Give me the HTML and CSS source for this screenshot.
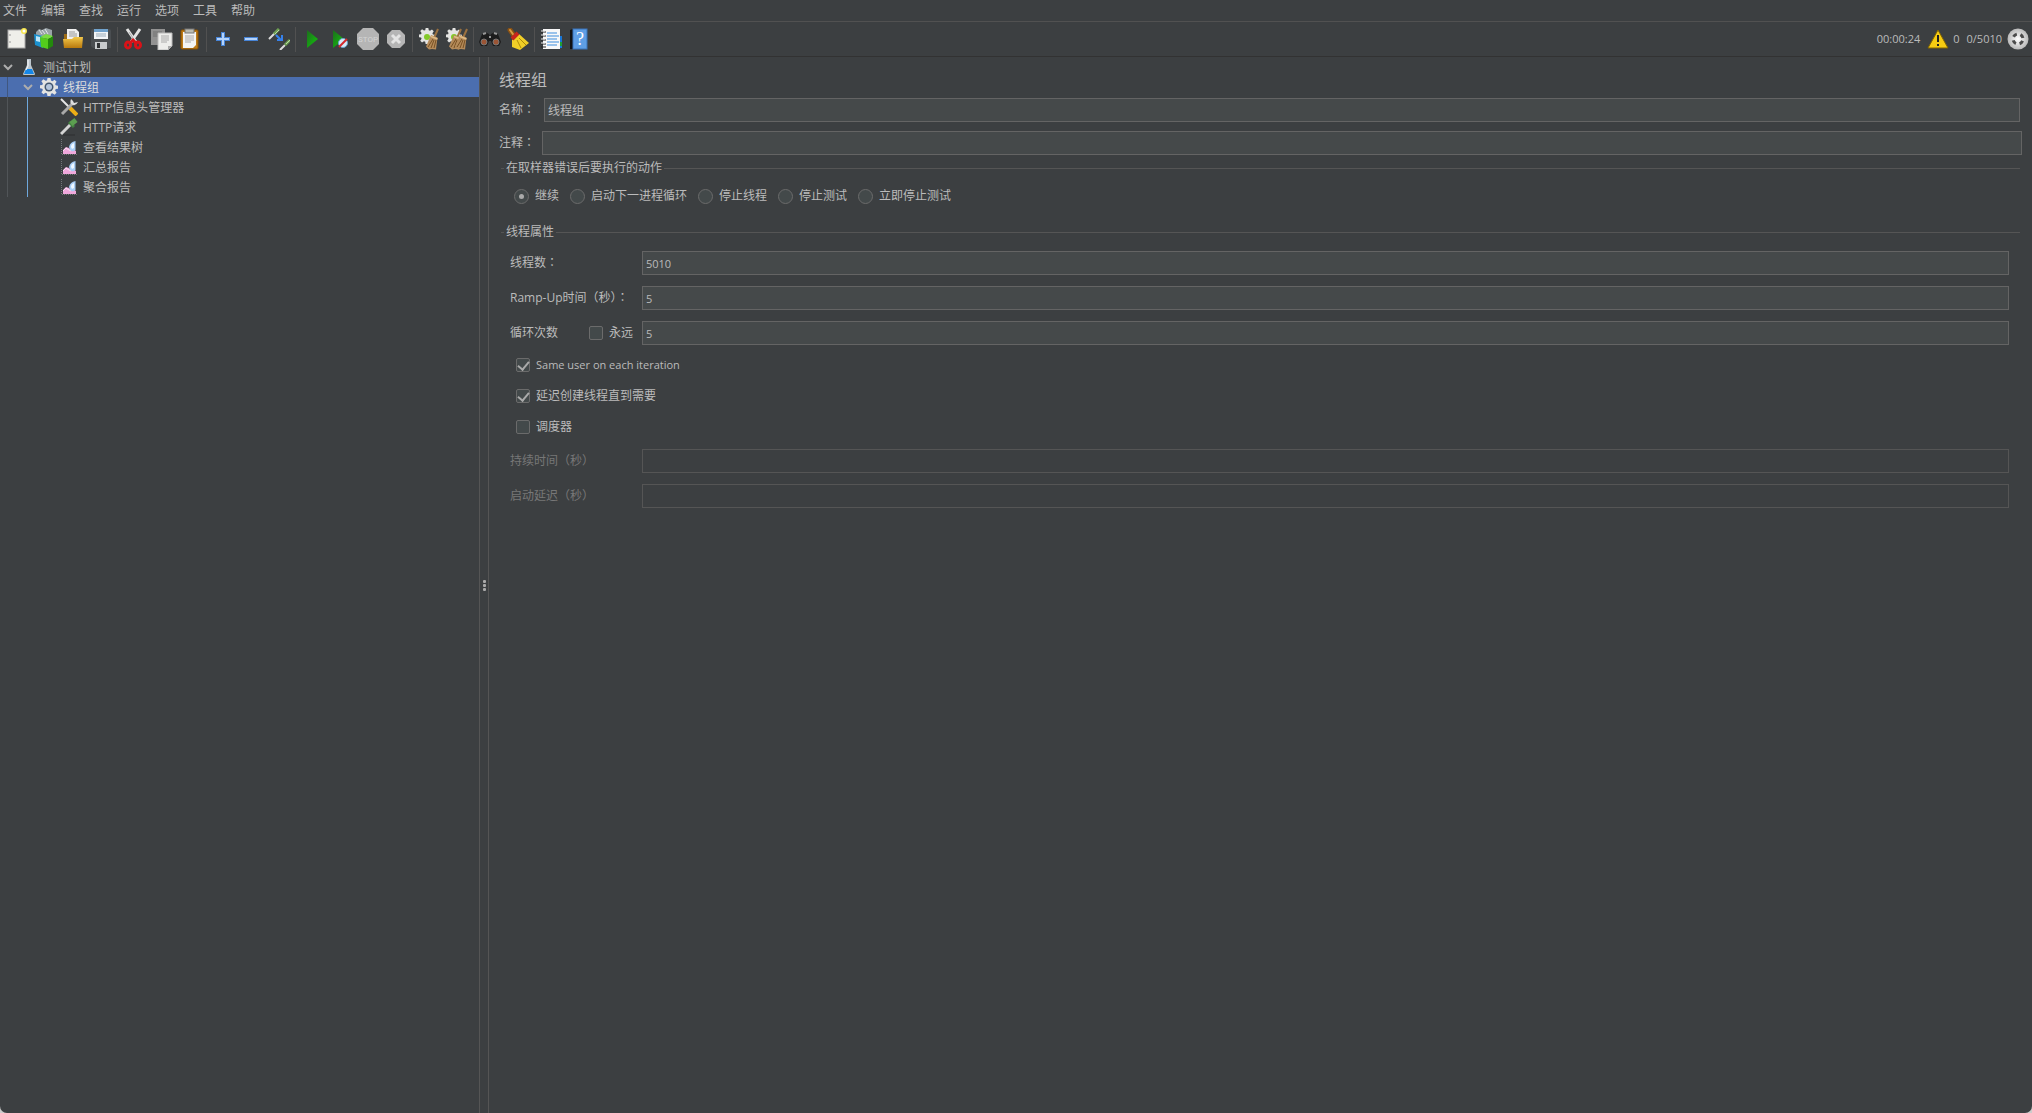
FILE: index.html
```
<!DOCTYPE html>
<html lang="zh-CN">
<head>
	<meta charset="UTF-8">
	<title>线程组</title>
	<link rel="stylesheet" href="styles.css">
</head>
<body>
	<!-- shared shapes -->
	<svg class="defs" width="0" height="0">
		<defs>
			<linearGradient id="gold" x1="0" y1="0" x2="0" y2="1"><stop offset="0" stop-color="#f3c84a"/><stop offset="1" stop-color="#b9790d"/></linearGradient>
			<linearGradient id="green" x1="0" y1="0" x2="1" y2="1"><stop offset="0" stop-color="#1d6d1d"/><stop offset="1" stop-color="#12c80c"/></linearGradient>
			<radialGradient id="silver"><stop offset="0" stop-color="#fff"/><stop offset="1" stop-color="#b9b9b9"/></radialGradient>
			<symbol id="arrow" viewBox="0 0 10 8"><path d="M1 2l4 4 4-4" fill="none" stroke="#adadad" stroke-width="2"/></symbol>
			<symbol id="gear" viewBox="0 0 18 18">
				<path d="M7.500 0h3l.5 2.600 1.400.6L14.600 1.700l2 2-1.500 2.200.6 1.400 2.300.4v3l-2.300.4-.6 1.400 1.500 2.200-2 2-2.200-1.500-1.400.6-.5 2.600h-3L7 15.400l-1.400-.6-2.200 1.500-2-2 1.500-2.200-.6-1.400L0 10.300v-3l2.300-.4.6-1.400L1.400 3.300l2-2 2.200 1.500L7 2.400z" fill="#e4e4e2"/>
			</symbol>
			<symbol id="broom" viewBox="0 0 16 22">
				<path d="M14 1L10 10" stroke="#9b7140" stroke-width="2" fill="none"/>
				<path d="M7 7l6.500 2.500L12 21.500l-4-.5-3 .5-3-3z" fill="#b48a59"/>
				<path d="M9 11L4 19M10 12L7 20M12 12l-2 8" stroke="#775023" stroke-width="1" fill="none"/>
				<path d="M7 8.500l6.500 2.500" stroke="#e0bc87" stroke-width="1.500"/>
			</symbol>
			<symbol id="chart" viewBox="0 0 18 18">
				<path d="M1.500 1v15.500H17" stroke="#75777a" fill="none" stroke-dasharray="1 1"/>
				<path d="M3 16v-4l3-3 3 1 2 2 2-1 3 2v3z" fill="#f0a8dc"/>
				<path d="M3 13l3-3 3 2 2 1" stroke="#fbe3f5" fill="none"/>
				<path d="M9 9q1-5 6.500-6v9q-2 2-4 1T9 9z" fill="#a9cdf4"/>
				<path d="M11 9q0-3 3-4v5l-2 1z" fill="#eef7ff"/>
			</symbol>
		</defs>
	</svg>

	<nav class="menu">
		<button>文件</button><button>编辑</button><button>查找</button><button>运行</button><button>选项</button><button>工具</button><button>帮助</button>
	</nav>

	<div class="toolbar">
		<button aria-label="新建"><svg width="22" height="22"><rect x="2" y="2" width="17" height="18" fill="#efefea" stroke="#aaa"/><path d="M4 6v2M4 13v2" stroke="#999"/><circle cx="18" cy="3" r="3" fill="#f7e64d"/><circle cx="18" cy="3" r="1.500" fill="#fff"/></svg></button>
		<button aria-label="模板"><svg width="22" height="22"><path d="M2 4l3-3 3 1 4-2 6 2v8H2z" fill="#9aa3a8"/><path d="M5 2l3 4M11 1l3 5M8 2l3 4" stroke="#dfe6e9"/><path d="M0 6l9 2v12l-8-3z" fill="#1b91cf"/><path d="M2 8l4 1v5l-4-1z" fill="#bde7fa"/><path d="M6 9l8 2v10l-7-2z" fill="#53cc1c"/><path d="M14 11l5-3v10l-5 3z" fill="#23890c"/><path d="M6 9l6-3 7 2-5 3z" fill="#7adc40"/></svg></button>
		<button aria-label="打开"><svg width="22" height="22"><path d="M2 6h4l1 3h13v11H2z" fill="#9c6b16"/><path d="M5 1h9l3 3v8H5z" fill="#f0f0f0"/><path d="M7 4h6M7 6h8M7 8h8" stroke="#999"/><path d="M1 11h9l2-2h9l-1 11H2z" fill="url(#gold)"/></svg></button>
		<button aria-label="保存"><svg width="22" height="22"><path d="M1 3q0-2 2-2h16q2 0 2 2v17H3l-2-2z" fill="#4a4e51"/><rect x="4" y="1" width="14" height="10" fill="#f4f6f8"/><rect x="4" y="1" width="14" height="3" fill="#71a2cc"/><path d="M6 6h10M6 8h10" stroke="#9bacb9"/><rect x="5" y="14" width="12" height="7" fill="#c8cbcd"/><rect x="7" y="15" width="3" height="5" fill="#303335"/></svg></button>
		<i class="sep"></i>
		<button aria-label="剪切"><svg width="22" height="22"><path d="M4 1l9 13M17 1L8 14" stroke="#e4e4e4" stroke-width="3"/><path d="M6 4l6 9" stroke="#aaa"/><g fill="none" stroke="#d91218" stroke-width="3"><ellipse cx="5" cy="17" rx="2.500" ry="3"/><ellipse cx="15" cy="17" rx="2.500" ry="3"/><path d="M7 15l3-3 3 3"/></g></svg></button>
		<button aria-label="复制"><svg width="22" height="22"><path d="M0 1h14v16H0z" fill="#929292"/><path d="M2 4h9M2 6h9M2 8h5" stroke="#707070"/><path d="M7 5h14v13l-4 4H7z" fill="#ededeb" stroke="#bbb"/><path d="M10 8h8M10 10h8M10 12h8M10 14h6" stroke="#aaa"/><path d="M17 22v-4h4z" fill="#aaa"/></svg></button>
		<button aria-label="粘贴"><svg width="22" height="22"><rect x="2" y="2" width="17" height="19" rx="1" fill="#bd7b17" stroke="#8a5200"/><path d="M4 4h13v13l-3 3H4z" fill="#f4f4f2"/><path d="M6 8h9M6 10h9M6 12h9M6 14h6" stroke="#aaa"/><rect x="6" y="1" width="9" height="4" fill="#bcbdb3" stroke="#777"/></svg></button>
		<i class="sep"></i>
		<button aria-label="展开"><svg width="22" height="22"><path d="M11 4v14M4 11h14" stroke="#4784d6" stroke-width="4"/><path d="M11 5v12M5 11h12" stroke="#b4d3fb" stroke-width="2"/></svg></button>
		<button aria-label="折叠"><svg width="22" height="22"><path d="M4 11h14" stroke="#4784d6" stroke-width="4"/><path d="M5 11h12" stroke="#b4d3fb" stroke-width="2"/></svg></button>
		<button aria-label="切换"><svg width="22" height="22"><path d="M1 11l6-6M12 22l5-5" stroke="#dadada" stroke-width="2"/><path d="M6 6l5-5M17 17l5-5" stroke="#6e9f52" stroke-width="3"/><path d="M7 6l4-4M18 16l4-4" stroke="#b9d7a7"/><path d="M8 7l5 5M14 7v5H9" stroke="#3681ea" stroke-width="2" fill="none"/></svg></button>
		<i class="sep"></i>
		<button aria-label="启动"><svg width="22" height="22"><path d="M6 2l11 9L6 20z" fill="url(#green)"/></svg></button>
		<button aria-label="不停顿开始"><svg width="22" height="22"><path d="M4 2l11 9L4 20z" fill="url(#green)"/><circle cx="14" cy="15" r="4.500" fill="#d7eaf7" stroke="#68a3cb"/><path d="M10 19l8-8" stroke="#d5282b" stroke-width="2"/></svg></button>
		<button aria-label="停止" disabled><svg width="22" height="22"><path d="M6 0h10l6 6v10l-6 6H6l-6-6V6z" fill="#b5b5b5"/><text x="11" y="14" class="stop">STOP</text></svg></button>
		<button aria-label="关闭" disabled><svg width="22" height="22"><path d="M7 2h8l5 5v8l-5 5H7l-5-5V7z" fill="#b5b5b5"/><path d="M7 7l8 8M15 7l-8 8" stroke="#e4e4e4" stroke-width="3"/></svg></button>
		<i class="sep"></i>
		<button aria-label="清除"><svg width="22" height="22"><use href="#gear" x="1" y="0" width="16" height="16"/><circle cx="9" cy="9" r="3" fill="#83c928"/><use href="#broom" x="6" y="0" width="16" height="22"/></svg></button>
		<button aria-label="清除全部"><svg width="22" height="22"><use href="#gear" x="0" y="0" width="16" height="16"/><circle cx="8" cy="9" r="3" fill="#83c928"/><use href="#broom" x="1" y="0" width="16" height="22"/><use href="#broom" x="7" y="0" width="16" height="22"/></svg></button>
		<i class="sep"></i>
		<button aria-label="查找"><svg width="22" height="22"><path d="M3 6l3-2 4 2 1 2 1-2 4-2 3 2 3 8-2 4h-6l-2-5h-2l-2 5H2l-2-4z" fill="#1c1c1c"/><path d="M4 6l3-1M15 5l3 1M10 9h2" stroke="#999" stroke-width="2"/><circle cx="5" cy="14" r="3" fill="#9c5535" stroke="#777"/><circle cx="17" cy="14" r="3" fill="#9c5535" stroke="#777"/></svg></button>
		<button aria-label="重置查找"><svg width="22" height="22"><path d="M3 2l5 7" stroke="#875014" stroke-width="5" stroke-linecap="round"/><path d="M3 2l5 7" stroke="#d99b42" stroke-width="2" stroke-linecap="round"/><path d="M5 12l7-6 10 9-9 7-8-3z" fill="#f1cf27"/><path d="M10 12l4 8M12 10l7 7" stroke="#ad8b09"/><path d="M5 11l6-6" stroke="#c7251c" stroke-width="4"/></svg></button>
		<i class="sep"></i>
		<button aria-label="函数助手"><svg width="22" height="22"><path d="M18 8h4v12h-4z" fill="#1876d6"/><path d="M18 14h4v4h-4z" fill="#1f9f35"/><path d="M3 1h17v20H3z" fill="#f8f8f8"/><path d="M7 5h10M7 8h12M7 11h10M7 14h12M7 17h10" stroke="#3c8ddd"/><path d="M1 4h5M1 8h5M1 12h5M1 16h5M1 19h5" stroke="#222"/><path d="M1 3h4M1 7h4M1 11h4M1 15h4" stroke="#eee"/></svg></button>
		<button aria-label="帮助"><svg width="22" height="22"><path d="M2 2l3-1v20H2z" fill="#111"/><rect x="5" y="1" width="14" height="20" fill="#5f9ee4" stroke="#3b75bb"/><text x="12" y="17" class="question">?</text></svg></button>

		<div class="status">
			<span>00:00:24</span>
			<button class="warn" aria-label="日志"><svg width="22" height="20"><path d="M11 1l10 18H1z" fill="#f7cc12" stroke="#846600" stroke-linejoin="round"/><path d="M11 6v7M11 15v2" stroke="#222" stroke-width="2"/></svg></button>
			<span class="errors">0</span>
			<span>0/5010</span>
			<svg class="remote" width="22" height="22"><circle cx="11" cy="11" r="10.500" fill="url(#silver)"/><circle cx="11" cy="11" r="5" fill="none" stroke="#4b4b4b" stroke-width="3" stroke-dasharray="4 3.850" stroke-dashoffset="-2"/></svg>
		</div>
	</div>

	<div class="split">
		<aside class="tree">
			<div class="row root">
				<svg class="toggle" width="10" height="8"><use href="#arrow"/></svg>
				<svg width="18" height="18"><path d="M7 1h4v6l4 9q0 1-1 1H4q-1 0-1-1l4-9z" fill="#bcc5cc"/><path d="M6 11h6l2 5H4z" fill="#1587e8"/><path d="M8 2v6l-2 4" stroke="#fff" fill="none"/></svg>
				<span>测试计划</span>
			</div>
			<div class="branch">
				<div class="row group selected">
					<svg class="toggle" width="10" height="8"><use href="#arrow"/></svg>
					<svg width="18" height="18"><use href="#gear"/><circle cx="9" cy="9" r="4.500" fill="#42566f"/><circle cx="9" cy="9" r="3" fill="#b5c6dc"/></svg>
					<span>线程组</span>
				</div>
				<div class="leaves">
					<div class="row leaf"><svg width="18" height="18"><path d="M1 1l9 9" stroke="#e5e5e5" stroke-width="2"/><path d="M10 10l7 7" stroke="#edae16" stroke-width="4"/><path d="M2 16L13 5" stroke="#a9a9a9" stroke-width="3"/><path d="M11 1q-2 5 2 6 3 1 5-3l-4 1-1-2z" fill="#ddd"/></svg><span>HTTP信息头管理器</span></div>
					<div class="row leaf"><svg width="18" height="18"><path d="M1 16L11 6" stroke="#d4d4d4" stroke-width="3"/><path d="M9 4l5 5" stroke="#438040" stroke-width="3"/><path d="M11 6l5-4" stroke="#5c9f50" stroke-width="5"/><path d="M3 17h12" stroke="#2c2e30"/></svg><span>HTTP请求</span></div>
					<div class="row leaf"><svg width="18" height="18"><use href="#chart"/></svg><span>查看结果树</span></div>
					<div class="row leaf"><svg width="18" height="18"><use href="#chart"/></svg><span>汇总报告</span></div>
					<div class="row leaf"><svg width="18" height="18"><use href="#chart"/></svg><span>聚合报告</span></div>
				</div>
			</div>
		</aside>

		<div class="divider"><i></i><i></i><i></i></div>

		<main class="panel">
			<h1>线程组</h1>
			<div class="field name"><label for="name">名称<span class="colon" lang="zh-TW">：</span></label><input type="text" id="name" value="线程组"></div>
			<div class="field comment"><label for="comment">注释<span class="colon" lang="zh-TW">：</span></label><input type="text" id="comment"></div>

			<fieldset class="actions">
				<legend>在取样器错误后要执行的动作</legend>
				<div class="radios">
					<label><input type="radio" name="action" checked>继续</label>
					<label><input type="radio" name="action">启动下一进程循环</label>
					<label><input type="radio" name="action">停止线程</label>
					<label><input type="radio" name="action">停止测试</label>
					<label><input type="radio" name="action">立即停止测试</label>
				</div>
			</fieldset>

			<fieldset class="props">
				<legend>线程属性</legend>
				<div class="prop"><label for="threads">线程数<span class="colon" lang="zh-TW">：</span></label><input type="text" id="threads" value="5010"></div>
				<div class="prop"><label for="ramp">Ramp-Up时间（秒）<span class="colon" lang="zh-TW">：</span></label><input type="text" id="ramp" value="5"></div>
				<div class="prop">
					<div class="loops"><label for="loops">循环次数</label><label class="check"><input type="checkbox">永远</label></div>
					<input type="text" id="loops" value="5">
				</div>
				<div class="checks">
					<label class="check latin"><input type="checkbox" checked>Same user on each iteration</label>
					<label class="check"><input type="checkbox" checked>延迟创建线程直到需要</label>
					<label class="check"><input type="checkbox">调度器</label>
				</div>
				<div class="prop off"><label for="duration">持续时间（秒）</label><input type="text" id="duration" disabled></div>
				<div class="prop off"><label for="delay">启动延迟（秒）</label><input type="text" id="delay" disabled></div>
			</fieldset>
		</main>
	</div>
</body>
</html>
```
FILE: styles.css
```
* {
	box-sizing: border-box;
}
html {
	background: #ccc;
}
body {
	margin: 0;
	min-height: 100vh;
	display: flex;
	flex-direction: column;
	border-radius: 0 0 7px 7px;
	background: #3c3f41;
	color: #bbb;
	font: 12px/20px "Open Sans", "Noto Sans CJK SC", sans-serif;
}
button, input {
	font: inherit;
	color: inherit;
}
button {
	border: 0;
	padding: 0;
	background: none;
}
svg {
	display: block;
	flex: none;
}
.defs {
	position: absolute;
}

/* menu and toolbar */
.menu {
	display: flex;
	height: 22px;
	border-bottom: 1px solid #515151;
}
.menu button {
	padding: 0 11px 0 3px;
}
.toolbar {
	display: flex;
	align-items: center;
	height: 35px;
	padding-left: 3px;
	border-bottom: 1px solid #323232;
}
.toolbar button {
	width: 28px;
	height: 28px;
	padding: 3px;
}
.sep {
	width: 5px;
	height: 25px;
	background: linear-gradient(#515151, #515151) 2px 0 / 1px 100% no-repeat;
}
.stop {
	font: 8px "Roboto", sans-serif;
	fill: #d4d4d4;
	text-anchor: middle;
}
.question {
	font: 18px "Liberation Serif", serif;
	fill: #fff;
	text-anchor: middle;
}
.status {
	display: flex;
	align-items: center;
	margin-left: auto;
	padding-right: 3px;
	font-size: 11px;
}
.status .warn {
	width: 29px;
	padding: 4px 0 4px 7px;
}
.status .errors {
	padding: 0 7px 0 4px;
}
.remote {
	margin-left: 5px;
}

/* tree */
.split {
	flex: 1;
	display: flex;
}
.tree {
	width: 479px;
	flex: none;
}
.row {
	display: flex;
	align-items: center;
	height: 20px;
}
.row span {
	padding: 2px 0 0 5px;
}
.root {
	padding-left: 3px;
}
.root .toggle {
	margin-right: 7px;
}
.group {
	padding-left: 23px;
}
.group .toggle {
	margin-right: 7px;
}
.leaf {
	padding-left: 32px;
}
.branch {
	background: linear-gradient(#515558, #515558) 7px 0 / 1px 100% no-repeat;
}
.leaves {
	margin-left: 27px;
	border-left: 1px solid #6fa8dc;
}
.selected {
	color: #ddd;
	background: linear-gradient(#40577f, #40577f) 7px 0 / 1px 100% no-repeat #4b6eaf;
}
.divider {
	display: flex;
	flex-direction: column;
	align-items: center;
	justify-content: center;
	gap: 1px;
	width: 10px;
	flex: none;
	border: solid #555;
	border-width: 0 1px;
}
.divider i {
	width: 3px;
	height: 3px;
	border-radius: 1px;
	background: #aaa;
}

/* settings panel */
.panel {
	flex: 1;
	padding: 11px 12px 0 10px;
}
h1 {
	margin: 0;
	font-size: 16px;
	font-weight: normal;
	line-height: 24px;
}
.colon {
	font-family: "Noto Sans CJK TC", sans-serif;
	line-height: 1;
}
input[type="text"] {
	flex: 1;
	min-width: 0;
	height: 24px;
	padding: 0 3px;
	border: 1px solid #646464;
	background: #45494a;
}
.field {
	display: flex;
	align-items: center;
}
.field label {
	width: 45px;
}
.name {
	margin-top: 6px;
}
.comment {
	margin: 9px -2px 0 0;
}
.comment label {
	width: 43px;
}
fieldset {
	min-width: 0;
	margin: 0 0 0 2px;
	padding: 0;
	border: 0;
}
legend {
	display: flex;
	align-items: center;
	gap: 2px;
	width: 100%;
	padding: 0;
}
legend::before, legend::after {
	content: "";
	width: 3px;
	height: 1px;
	background: #555;
}
legend::after {
	flex: 1;
}
.actions {
	margin-top: 3px;
}
.radios {
	display: flex;
	gap: 11px;
	padding: 8px 0 0 13px;
}
.radios label, .check {
	display: flex;
	align-items: center;
	gap: 6px;
}
input[type="radio"], input[type="checkbox"] {
	appearance: none;
	display: grid;
	place-items: center;
	width: 15px;
	height: 15px;
	margin: 0;
	border: 1px solid #6b6b6b;
	border-radius: 50%;
	background: #43494a;
}
input[type="radio"]:checked::before {
	content: "";
	width: 5px;
	height: 5px;
	border-radius: 50%;
	background: #aaa;
}
input[type="checkbox"] {
	width: 14px;
	height: 14px;
	border-radius: 2px;
}
input[type="checkbox"]:checked::before {
	content: "";
	width: 5px;
	height: 9px;
	margin-bottom: 3px;
	border: solid #aaa;
	border-width: 0 2px 2px 0;
	transform: rotate(40deg);
}
.props {
	margin-top: 16px;
}
.props legend {
	margin-bottom: 9px;
}
.prop {
	display: grid;
	grid-template-columns: 132px 1fr;
	align-items: center;
	margin: 0 11px 11px 9px;
}
.prop input[type="text"], .latin {
	font-size: 11px;
}
.loops {
	display: flex;
	justify-content: space-between;
	padding-right: 9px;
}
.checks {
	display: grid;
	gap: 11px;
	padding: 0 0 12px 15px;
	margin-top: -1px;
}
.off {
	color: #777;
}
.off input:disabled {
	border-color: #555;
	background: #3c3f41;
}
```
